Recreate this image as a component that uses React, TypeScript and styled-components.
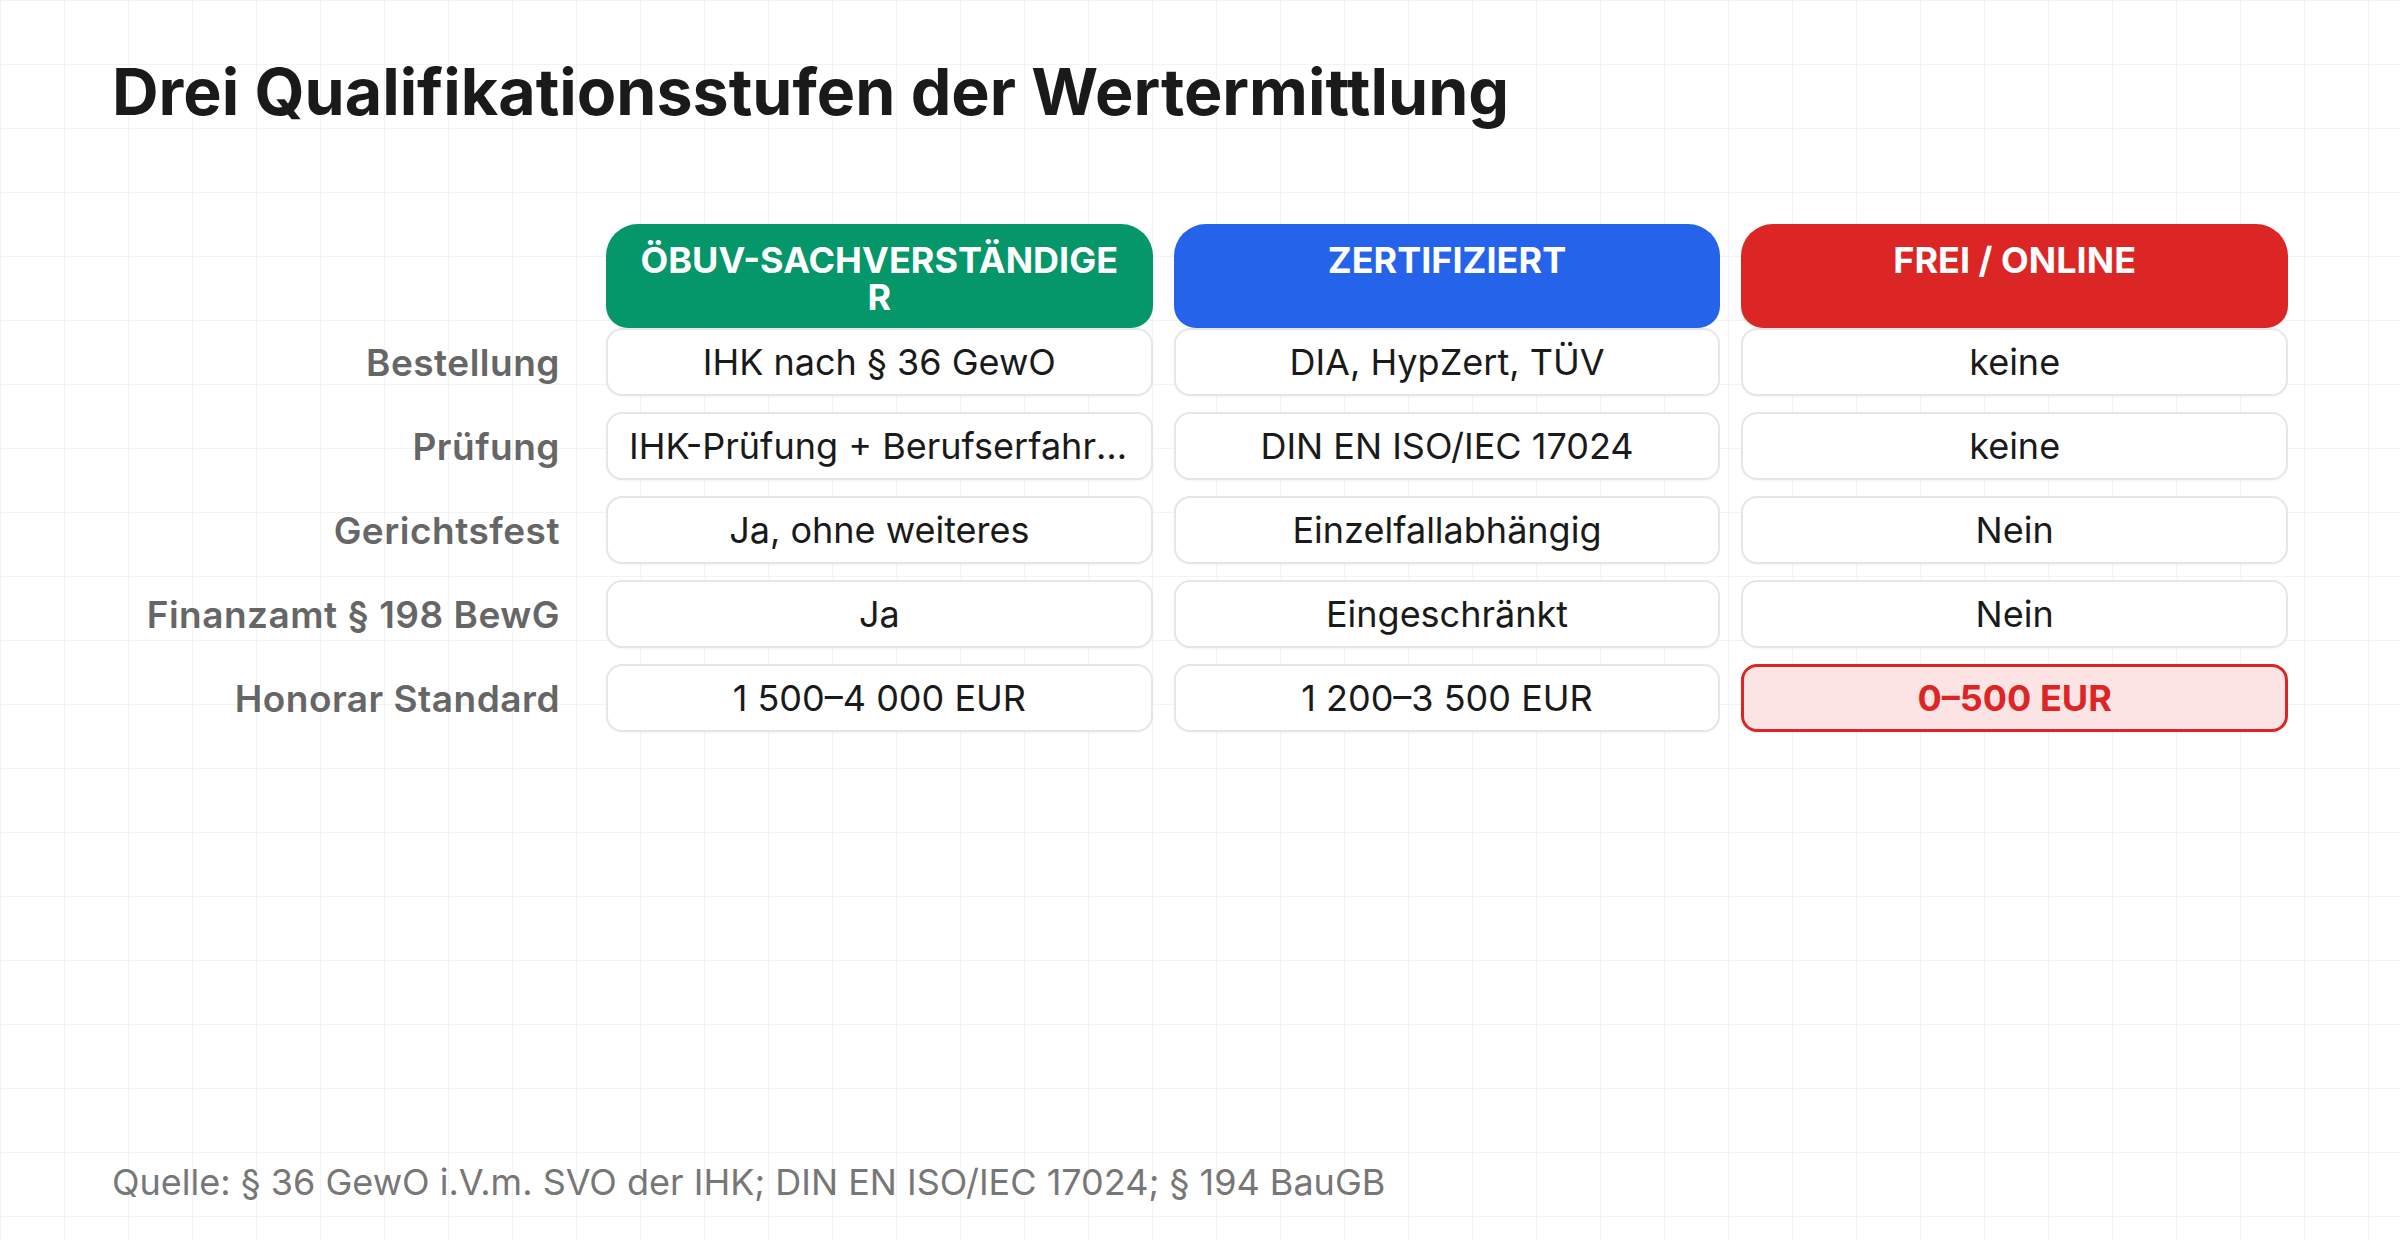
import React from "react";
import styled, { createGlobalStyle } from "styled-components";

const GlobalStyle = createGlobalStyle`
  html, body {
    margin: 0;
    padding: 0;
    background: #ffffff;
  }
  body {
    font-family: Inter, "Noto Sans", "Liberation Sans", sans-serif;
  }
  * { box-sizing: border-box; }
`;

const Page = styled.div`
  width: 2400px;
  height: 1240px;
  display: flex;
  flex-direction: column;
  padding: 53px 112px 36px;
  background-color: #ffffff;
  background-image:
    linear-gradient(to right, #f3f3f3 1px, transparent 1px),
    linear-gradient(to bottom, #f3f3f3 1px, transparent 1px);
  background-size: 64px 64px;
  overflow: hidden;
`;

const Title = styled.h1`
  margin: 0;
  font-size: 64.5px;
  font-weight: 700;
  line-height: 78px;
  color: #1a1a1a;
`;

const Table = styled.div`
  margin-top: 93px;
  display: grid;
  grid-template-columns: 473px repeat(3, 1fr);
  column-gap: 21px;
  row-gap: 16px;
`;

const HeaderRow = styled.div`
  display: contents;
`;

const Spacer = styled.div``;

const Header = styled.div<{ $bg: string }>`
  background: ${(p) => p.$bg};
  color: #ffffff;
  border-radius: 32px 32px 22px 22px;
  padding: 18px 28px 12px;
  min-height: 104px;
  font-size: 36px;
  font-weight: 700;
  line-height: 37px;
  text-align: center;
  text-transform: uppercase;
  word-break: break-all;
  margin-bottom: -16px;
`;

const Label = styled.div`
  height: 68px;
  display: flex;
  align-items: center;
  justify-content: flex-end;
  padding-right: 25px;
  font-size: 37px;
  font-weight: 600;
  letter-spacing: 0.5px;
  color: #666666;
  white-space: nowrap;
`;

const Cell = styled.div<{ $highlight?: boolean }>`
  height: 68px;
  display: flex;
  align-items: center;
  justify-content: center;
  padding: 0 21px;
  border-radius: 16px;
  border: ${(p) => (p.$highlight ? "3px solid #dc2626" : "2px solid #e6e6e6")};
  background: ${(p) => (p.$highlight ? "#fce4e4" : "#ffffff")};
  box-shadow: 0 1px 2px rgba(0, 0, 0, 0.04);
  font-size: 36px;
  font-weight: ${(p) => (p.$highlight ? 700 : 400)};
  color: ${(p) => (p.$highlight ? "#dc2626" : "#1a1a1a")};
  min-width: 0;
`;

const CellText = styled.span`
  display: block;
  white-space: nowrap;
  overflow: hidden;
  text-overflow: ellipsis;
  max-width: 100%;
`;

const Footer = styled.div`
  margin-top: auto;
  font-size: 36px;
  line-height: 43px;
  color: #777777;
`;

const headers = [
  { text: "ÖBUV-Sachverständiger", bg: "#059669" },
  { text: "Zertifiziert", bg: "#2563eb" },
  { text: "Frei / Online", bg: "#dc2626" },
];

const rows: { label: string; values: string[]; highlight?: number }[] = [
  { label: "Bestellung", values: ["IHK nach § 36 GewO", "DIA, HypZert, TÜV", "keine"] },
  { label: "Prüfung", values: ["IHK-Prüfung + Berufserfahrung", "DIN EN ISO/IEC 17024", "keine"] },
  { label: "Gerichtsfest", values: ["Ja, ohne weiteres", "Einzelfallabhängig", "Nein"] },
  { label: "Finanzamt § 198 BewG", values: ["Ja", "Eingeschränkt", "Nein"] },
  { label: "Honorar Standard", values: ["1 500–4 000 EUR", "1 200–3 500 EUR", "0–500 EUR"], highlight: 2 },
];

export default function App() {
  return (
    <>
      <GlobalStyle />
      <Page>
        <Title>Drei Qualifikationsstufen der Wertermittlung</Title>
        <Table>
          <HeaderRow>
            <Spacer />
            {headers.map((h) => (
              <Header key={h.text} $bg={h.bg}>
                {h.text}
              </Header>
            ))}
          </HeaderRow>
          {rows.map((r) => (
            <React.Fragment key={r.label}>
              <Label>{r.label}</Label>
              {r.values.map((v, i) => (
                <Cell key={i} $highlight={r.highlight === i}>
                  <CellText>{v}</CellText>
                </Cell>
              ))}
            </React.Fragment>
          ))}
        </Table>
        <Footer>Quelle: § 36 GewO i.V.m. SVO der IHK; DIN EN ISO/IEC 17024; § 194 BauGB</Footer>
      </Page>
    </>
  );
}
